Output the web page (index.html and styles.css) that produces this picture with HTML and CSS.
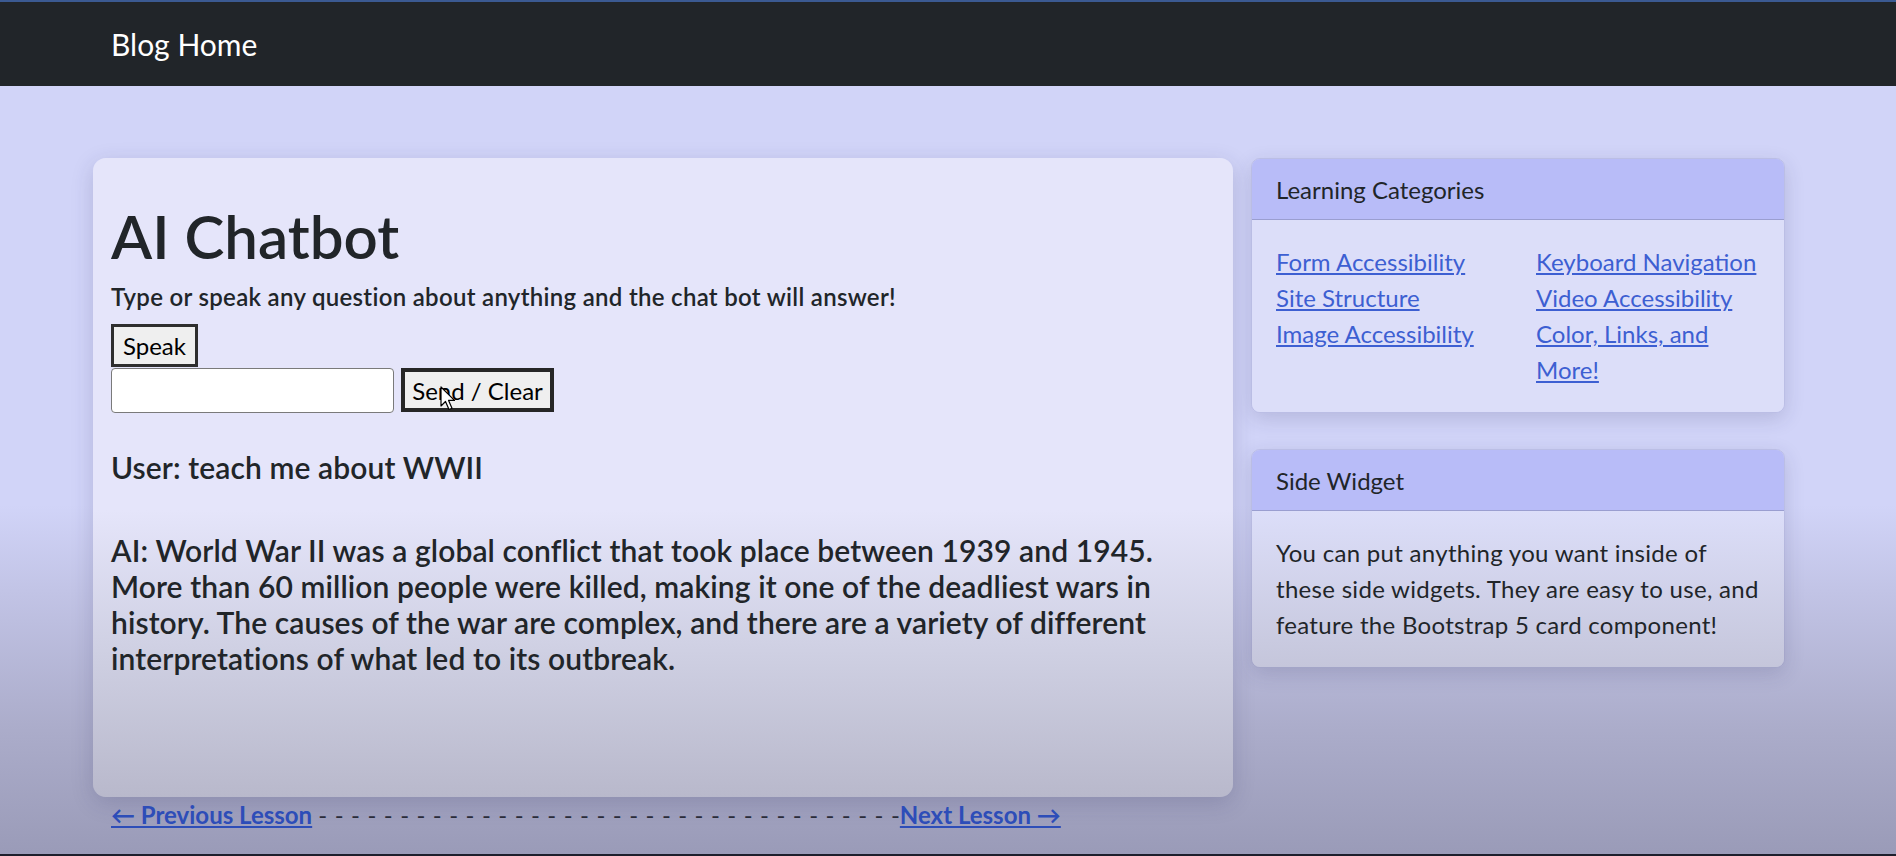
FILE: index.html
```html
<!DOCTYPE html>
<html lang="en">
<head>
<meta charset="utf-8">
<title>AI Chatbot</title>
<link rel="stylesheet" href="styles.css">
</head>
<body>
<nav class="navbar">
  <div class="nav-inner">
    <a class="brand" href="#">Blog Home</a>
  </div>
</nav>
<div class="page">
  <div class="row">
    <main class="chat">
      <h1 class="title">AI Chatbot</h1>
      <p class="lead">Type or speak any question about anything and the chat bot will answer!</p>
      <button class="btn btn-speak" type="button">Speak</button>
      <div class="ask">
        <input class="ask-input" type="text" aria-label="Question">
        <button class="btn btn-send" type="button">Send / Clear</button>
        <svg class="cursor" width="16" height="26" viewBox="0 0 16 26" aria-hidden="true"><path d="M1 1 L1 20 L5.5 15.5 L9 23.5 L12 22.2 L8.6 14.4 L14.5 14.4 Z" fill="#fff" stroke="#000" stroke-width="1.2" stroke-linejoin="round"/></svg>
      </div>
      <h5 class="msg msg-user">User: teach me about WWII</h5>
      <h5 class="msg msg-ai">AI: World War II was a global conflict that took place between 1939 and 1945. More than 60 million people were killed, making it one of the deadliest wars in history. The causes of the war are complex, and there are a variety of different interpretations of what led to its outbreak.</h5>
    </main>
    <aside class="side">
      <section class="card">
        <div class="card-header">Learning Categories</div>
        <div class="card-body cats">
          <ul class="links">
            <li><a href="#">Form Accessibility</a></li>
            <li><a href="#">Site Structure</a></li>
            <li><a href="#">Image Accessibility</a></li>
          </ul>
          <ul class="links">
            <li><a href="#">Keyboard Navigation</a></li>
            <li><a href="#">Video Accessibility</a></li>
            <li><a href="#">Color, Links, and More!</a></li>
          </ul>
        </div>
      </section>
      <section class="card">
        <div class="card-header">Side Widget</div>
        <div class="card-body widget-text">You can put anything you want inside of these side widgets. They are easy to use, and feature the Bootstrap 5 card component!</div>
      </section>
    </aside>
  </div>
  <p class="pager"><a href="#">← Previous Lesson</a> <span class="dashes">- - - - - - - - - - - - - - - - - - - - - - - - - - - - - - - - - - - -</span><a href="#">Next Lesson →</a></p>
</div>
</body>
</html>
```
FILE: styles.css
```css
* { box-sizing: border-box; }

html, body { margin: 0; }

body {
  min-height: 856px;
  font-family: Lato, "Open Sans", "Liberation Sans", sans-serif;
  font-size: 24px;
  line-height: 36px;
  color: #212529;
  background: linear-gradient(to bottom, #d1d4f8 0, #d1d4f8 505px, #c2c4e6 590px, #abacca 730px, #9a9bb8 854px);
  border-bottom: 2px solid #1d1f2c;
}

.navbar {
  height: 86px;
  background: #212529;
  border-top: 2px solid #3b5a92;
}

.nav-inner {
  width: 1710px;
  height: 100%;
  margin: 0 auto;
  padding: 0 18px;
  display: flex;
  align-items: center;
}

.brand {
  color: #fff;
  font-size: 30px;
  line-height: 36px;
  text-decoration: none;
}

.page {
  width: 1710px;
  margin: 72px auto 0;
}

.row {
  display: flex;
  align-items: flex-start;
}

.chat {
  flex: 0 0 1140px;
  height: 639px;
  padding: 42px 18px 0;
  border-radius: 13px;
  background: linear-gradient(to bottom, #e5e5fa 0, #e5e5fa 510px, #cfd0e3 650px, #b8b8cb 800px) fixed;
  box-shadow: 0 6px 22px rgba(40, 40, 90, 0.18);
}

.title {
  margin: 0;
  font-size: 60px;
  line-height: 72px;
  font-weight: 600;
}

.lead {
  margin: 7px 0 0;
  font-weight: 600;
  letter-spacing: 0.3px;
}

.btn {
  display: flex;
  align-items: center;
  justify-content: center;
  padding: 0;
  font-family: inherit;
  font-size: 24px;
  color: #000;
  background: #efefef;
  border: 3px solid #2e2e2e;
}

.btn-speak {
  width: 87px;
  height: 43px;
  margin-top: 9px;
}

.ask {
  position: relative;
  display: flex;
  align-items: flex-start;
  gap: 7px;
  margin-top: 1px;
}

.ask-input {
  width: 283px;
  height: 45px;
  background: #fff;
  border: 1px solid #7a7a7a;
  border-radius: 4px;
}

.btn-send {
  width: 153px;
  height: 44px;
  border-width: 4px;
  border-color: #262626;
}

.cursor {
  position: absolute;
  left: 329px;
  top: 18px;
}

.msg {
  margin: 0;
  font-size: 30px;
  line-height: 36px;
  font-weight: 600;
  letter-spacing: 0.1px;
}

.msg-user { margin-top: 36px; }
.msg-ai { margin-top: 47px; }

.side {
  flex: 0 0 570px;
  padding: 0 18px;
}

.card {
  margin-bottom: 36px;
  border: 1px solid rgba(60, 60, 110, 0.14);
  border-radius: 9px;
  overflow: hidden;
  box-shadow: 0 6px 20px rgba(40, 40, 90, 0.16);
}

.card-header {
  padding: 13px 24px 11px;
  background: #b8bcf8;
  border-bottom: 1px solid #9a9ed0;
}

.card-body {
  padding: 24px;
  background: linear-gradient(to bottom, #dcdef9 0, #dcdef9 510px, #c5c6db 667px, #afb0c6 800px) fixed;
}

.widget-text {
  letter-spacing: 0.3px;
}

.cats {
  display: grid;
  grid-template-columns: 1fr 1fr;
  column-gap: 36px;
}

.links {
  margin: 0;
  padding: 0;
  list-style: none;
}

.links a {
  color: #3d5fd2;
}

.pager {
  margin: 0;
  padding-left: 18px;
  line-height: 36px;
}

.pager a {
  color: #2d4db8;
  font-weight: 700;
}

.dashes {
  color: #2a2c3a;
  word-spacing: 1.3px;
}
```
